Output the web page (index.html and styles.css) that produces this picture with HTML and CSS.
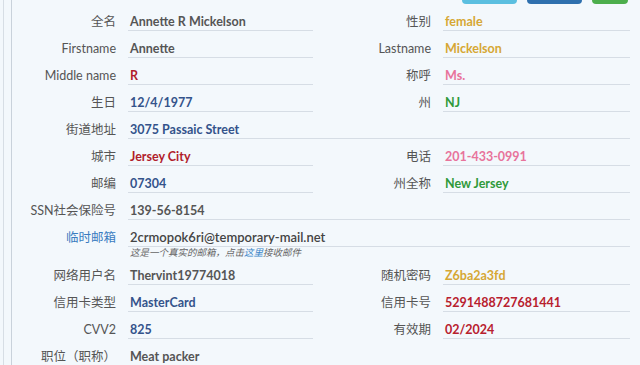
FILE: index.html
```html
<!DOCTYPE html>
<html lang="zh-CN">

<head>
    <meta charset="UTF-8">
    <meta name="viewport" content="width=device-width, initial-scale=1.0">
    <title>Identity</title>
    <link rel="stylesheet" href="styles.css">
</head>

<body>
    <div class="frame">
        <div class="panel">
            <div class="toolbar">
                <button class="btn btn-info" aria-label="复制"></button>
                <button class="btn btn-primary" aria-label="刷新"></button>
                <button class="btn btn-success" aria-label="保存"></button>
            </div>

            <div class="info">
                <div class="label">全名</div>
                <div class="value gray">Annette R Mickelson</div>
                <div class="label">性别</div>
                <div class="value gold">female</div>

                <div class="label">Firstname</div>
                <div class="value gray">Annette</div>
                <div class="label">Lastname</div>
                <div class="value gold">Mickelson</div>

                <div class="label">Middle name</div>
                <div class="value red">R</div>
                <div class="label">称呼</div>
                <div class="value pink">Ms.</div>

                <div class="label">生日</div>
                <div class="value navy">12/4/1977</div>
                <div class="label">州</div>
                <div class="value green">NJ</div>

                <div class="label">街道地址</div>
                <div class="value navy wide">3075 Passaic Street</div>

                <div class="label">城市</div>
                <div class="value red">Jersey City</div>
                <div class="label">电话</div>
                <div class="value pink">201-433-0991</div>

                <div class="label">邮编</div>
                <div class="value navy">07304</div>
                <div class="label">州全称</div>
                <div class="value green">New Jersey</div>

                <div class="label">SSN社会保险号</div>
                <div class="value gray wide">139-56-8154</div>

                <div class="label mail-label">临时邮箱</div>
                <div class="wide mail">
                    <div class="value email">2crmopok6ri@temporary-mail.net</div>
                    <div class="hint">这是一个真实的邮箱，点击<a href="#">这里</a>接收邮件</div>
                </div>

                <div class="label">网络用户名</div>
                <div class="value gray">Thervint19774018</div>
                <div class="label">随机密码</div>
                <div class="value gold">Z6ba2a3fd</div>

                <div class="label">信用卡类型</div>
                <div class="value navy">MasterCard</div>
                <div class="label">信用卡号</div>
                <div class="value crimson">5291488727681441</div>

                <div class="label">CVV2</div>
                <div class="value navy">825</div>
                <div class="label">有效期</div>
                <div class="value crimson">02/2024</div>

                <div class="label">职位（职称）</div>
                <div class="value gray wide">Meat packer</div>
            </div>
        </div>
    </div>
</body>

</html>
```

FILE: styles.css
```css
body {
    margin: 0;
    background-color: #f3f8fc;
    font-family: Lato, "Noto Sans CJK SC", sans-serif;
}

.frame {
    margin-left: 3px;
    border-left: 1px solid #d7dee5;
}

.panel {
    margin-left: 7px;
    border-left: 1px solid #c9d2db;
    min-height: 365px;
}

.toolbar {
    display: flex;
    justify-content: flex-end;
    align-items: flex-end;
    gap: 10px;
    height: 4px;
    overflow: hidden;
    padding-right: 12px;
}

.btn {
    flex-shrink: 0;
    height: 28px;
    width: 55px;
    border: none;
    border-radius: 4px;
}

.btn-info {
    background-color: #5bbfe0;
}

.btn-primary {
    background-color: #2f70ae;
}

.btn-success {
    width: 36px;
    background-color: #4cae4c;
}

.info {
    display: grid;
    grid-template-columns: 104px 185px 106px 187px;
    column-gap: 12px;
}

.label {
    padding-top: 9px;
    line-height: 17px;
    height: 17px;
    text-align: right;
    font-size: 12.5px;
    color: #555;
    white-space: nowrap;
}

.value {
    padding-top: 9px;
    padding-left: 2px;
    line-height: 17px;
    height: 17px;
    border-bottom: 1px solid #d6dde5;
    font-size: 12.5px;
    font-weight: bold;
    white-space: nowrap;
}

.wide {
    grid-column: 2 / 5;
}

.mail-label {
    color: #3a7cc0;
}

.email {
    color: #444;
    font-size: 13px;
    font-weight: 600;
}

.hint {
    padding-left: 2px;
    line-height: 11px;
    font-size: 9.5px;
    font-style: italic;
    color: #666;
}

.hint a {
    color: #3a86c8;
    text-decoration: none;
}

.gray {
    color: #555;
}

.gold {
    color: #d6a734;
}

.red {
    color: #b11d2b;
}

.crimson {
    color: #b8202e;
}

.pink {
    color: #e8739b;
}

.navy {
    color: #34538b;
}

.green {
    color: #2f9a3a;
}
```
